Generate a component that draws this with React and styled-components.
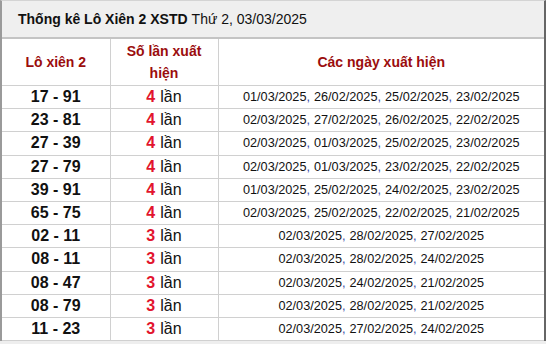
import React from "react";
import styled, { createGlobalStyle } from "styled-components";

const GlobalStyle = createGlobalStyle`
  body {
    margin: 0;
    background: #eeeeee;
    font-family: "Liberation Sans", Arial, sans-serif;
  }
`;

const Panel = styled.div`
  width: 546px;
  box-sizing: border-box;
  border-left: 2px solid #9a9a9a;
  border-right: 2px solid #666;
  border-top: 1px solid #d4d4d4;
  background: #fff;
`;

const TitleBar = styled.div`
  height: 36px;
  display: flex;
  align-items: center;
  padding-left: 16px;
  background: #efefef;
  border-bottom: 2px solid #c4c4c4;
  font-size: 14px;
  color: #111;
`;

const Strong = styled.b`
  font-weight: bold;
  margin-right: 4px;
`;

const Table = styled.table`
  width: 100%;
  border-collapse: collapse;
  table-layout: fixed;
`;

const Col = styled.col`
  width: ${p => p.$w || "auto"};
`;

const Head = styled.th`
  height: 46px;
  padding: 0;
  color: #9b0d0d;
  font-size: 14px;
  font-weight: bold;
  line-height: 22px;
  text-align: center;
  border-right: 1px solid #d0d0d0;
  border-bottom: 1px solid #d0d0d0;
  &:last-child {
    border-right: 0;
  }
`;

const Cell = styled.td`
  height: 22.2px;
  padding: 0;
  text-align: center;
  border-right: 1px solid #d0d0d0;
  border-bottom: 1px solid #d0d0d0;
  color: #111;
  &:last-child {
    border-right: 0;
  }
`;

const Pair = styled(Cell)`
  font-size: 16px;
  font-weight: bold;
`;

const Count = styled(Cell)`
  font-size: 16px;
`;

const Num = styled.b`
  color: #e2142d;
  margin-right: 5px;
`;

const Dates = styled(Cell)`
  font-size: 12.7px;
`;

const Comma = styled.span`
  color: #3b4aa8;
  margin-right: 4px;
`;

const rows = [
  ["17 - 91", 4, ["01/03/2025", "26/02/2025", "25/02/2025", "23/02/2025"]],
  ["23 - 81", 4, ["02/03/2025", "27/02/2025", "26/02/2025", "22/02/2025"]],
  ["27 - 39", 4, ["02/03/2025", "01/03/2025", "25/02/2025", "23/02/2025"]],
  ["27 - 79", 4, ["02/03/2025", "01/03/2025", "23/02/2025", "22/02/2025"]],
  ["39 - 91", 4, ["01/03/2025", "25/02/2025", "24/02/2025", "23/02/2025"]],
  ["65 - 75", 4, ["02/03/2025", "25/02/2025", "22/02/2025", "21/02/2025"]],
  ["02 - 11", 3, ["02/03/2025", "28/02/2025", "27/02/2025"]],
  ["08 - 11", 3, ["02/03/2025", "28/02/2025", "24/02/2025"]],
  ["08 - 47", 3, ["02/03/2025", "24/02/2025", "21/02/2025"]],
  ["08 - 79", 3, ["02/03/2025", "28/02/2025", "21/02/2025"]],
  ["11 - 23", 3, ["02/03/2025", "27/02/2025", "24/02/2025"]]
];

const DateList = ({ items }) => (
  <>
    {items.map((d, i) => (
      <React.Fragment key={d + i}>
        {d}
        {i < items.length - 1 && <Comma>,</Comma>}
      </React.Fragment>
    ))}
  </>
);

const App = () => {
  return (
    <>
      <GlobalStyle />
      <Panel>
        <TitleBar>
          <Strong>Thống kê Lô Xiên 2 XSTD</Strong> Thứ 2, 03/03/2025
        </TitleBar>
        <Table>
          <colgroup>
            <Col $w="108px" />
            <Col $w="108px" />
            <Col />
          </colgroup>
          <thead>
            <tr>
              <Head>Lô xiên 2</Head>
              <Head>Số lần xuất hiện</Head>
              <Head>Các ngày xuất hiện</Head>
            </tr>
          </thead>
          <tbody>
            {rows.map(([pair, n, dates]) => (
              <tr key={pair}>
                <Pair>{pair}</Pair>
                <Count>
                  <Num>{n}</Num>lần
                </Count>
                <Dates>
                  <DateList items={dates} />
                </Dates>
              </tr>
            ))}
          </tbody>
        </Table>
      </Panel>
    </>
  );
};

export default App;
